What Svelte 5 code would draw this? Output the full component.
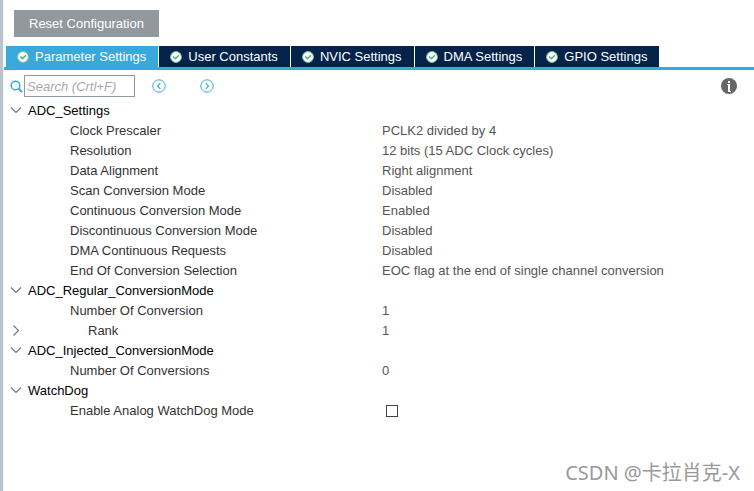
<script>
  let activeTab = $state('Parameter Settings');
  let search = $state('');
  let watchdog = $state(false);

  const tabs = [
    'Parameter Settings',
    'User Constants',
    'NVIC Settings',
    'DMA Settings',
    'GPIO Settings'
  ];

  let groups = $state([
    {
      name: 'ADC_Settings',
      open: true,
      params: [
        { name: 'Clock Prescaler', value: 'PCLK2 divided by 4' },
        { name: 'Resolution', value: '12 bits (15 ADC Clock cycles)' },
        { name: 'Data Alignment', value: 'Right alignment' },
        { name: 'Scan Conversion Mode', value: 'Disabled' },
        { name: 'Continuous Conversion Mode', value: 'Enabled' },
        { name: 'Discontinuous Conversion Mode', value: 'Disabled' },
        { name: 'DMA Continuous Requests', value: 'Disabled' },
        { name: 'End Of Conversion Selection', value: 'EOC flag at the end of single channel conversion' }
      ]
    },
    {
      name: 'ADC_Regular_ConversionMode',
      open: true,
      params: [
        { name: 'Number Of Conversion', value: '1' },
        { name: 'Rank', value: '1', nested: true }
      ]
    },
    {
      name: 'ADC_Injected_ConversionMode',
      open: true,
      params: [{ name: 'Number Of Conversions', value: '0' }]
    },
    {
      name: 'WatchDog',
      open: true,
      params: [{ name: 'Enable Analog WatchDog Mode', checkbox: true }]
    }
  ]);
</script>

{#snippet chevron(open)}
  <svg class="chevron" width="12" height="12" viewBox="0 0 12 12">
    <path d={open ? 'M1 2.5 L6 7.5 L11 2.5' : 'M3.5 0.5 L8.5 5.5 L3.5 10.5'} />
  </svg>
{/snippet}

<div class="panel">
  <button class="reset">Reset Configuration</button>

  <div class="tabs" role="tablist">
    {#each tabs as tab}
      <button
        class="tab"
        class:active={tab === activeTab}
        role="tab"
        aria-selected={tab === activeTab}
        onclick={() => (activeTab = tab)}
      >
        <svg width="12" height="12" viewBox="0 0 12 12">
          <circle cx="6" cy="6" r="5.4" fill="#fff" stroke="#7cc698" stroke-width="1" />
          <path d="M3.2 5.6 L5.4 7.8 L9 4.2" fill="none" stroke="#4bae73" stroke-width="1.4" />
        </svg>
        {tab}
      </button>
    {/each}
  </div>

  <div class="toolbar">
    <label class="search">
      <svg width="13" height="13" viewBox="0 0 13 13" fill="none" stroke="#39a9dc">
        <circle cx="5.5" cy="5.5" r="4.3" stroke-width="1.5" />
        <path d="M8.5 8.5 L12 12" stroke-width="2" />
      </svg>
      <input type="text" aria-label="Search" placeholder="Search (Crtl+F)" bind:value={search} />
    </label>
    <div class="arrows">
      <button class="icon" aria-label="Previous match">
        <svg width="14" height="14" viewBox="0 0 14 14" fill="none" stroke="#39a9dc">
          <circle cx="7" cy="7" r="6.2" />
          <path d="M8.3 4.2 L5.5 7 L8.3 9.8" stroke-width="1.2" />
        </svg>
      </button>
      <button class="icon" aria-label="Next match">
        <svg width="14" height="14" viewBox="0 0 14 14" fill="none" stroke="#39a9dc">
          <circle cx="7" cy="7" r="6.2" />
          <path d="M5.7 4.2 L8.5 7 L5.7 9.8" stroke-width="1.2" />
        </svg>
      </button>
    </div>
    <button class="icon info" aria-label="Information">
      <svg width="16" height="16" viewBox="0 0 16 16">
        <circle cx="8" cy="8" r="8" fill="#666" />
        <path d="M7 3h2v2H7z M6 6h3v7h1v1H7V7H6z" fill="#fff" />
      </svg>
    </button>
  </div>

  <table>
    <colgroup>
      <col class="name-col" />
      <col />
    </colgroup>
    <tbody>
      {#each groups as group}
        <tr>
          <th colspan="2">
            <button class="group" aria-expanded={group.open} onclick={() => (group.open = !group.open)}>
              {@render chevron(group.open)}
              {group.name}
            </button>
          </th>
        </tr>
        {#if group.open}
          {#each group.params as param}
            <tr>
              <td class="name">
                {#if param.nested}
                  <button class="group nested" aria-expanded="false">
                    {@render chevron(false)}
                    {param.name}
                  </button>
                {:else if param.checkbox}
                  <label class="indent" for="watchdog">{param.name}</label>
                {:else}
                  <span class="indent">{param.name}</span>
                {/if}
              </td>
              <td class="value">
                {#if param.checkbox}
                  <input id="watchdog" type="checkbox" bind:checked={watchdog} />
                {:else}
                  {param.value}
                {/if}
              </td>
            </tr>
          {/each}
        {/if}
      {/each}
    </tbody>
  </table>

  <div class="watermark">CSDN @卡拉肖克-X</div>
</div>

<style>
  :global(body) {
    background-color: #fff;
  }

  .panel {
    box-sizing: border-box;
    min-height: 100vh;
    padding-top: 10px;
    border-left: 3px solid #b8c4ce;
    box-shadow: inset 1px 0 #f0f0f0;
    display: flex;
    flex-direction: column;
    font-family: 'Liberation Sans', Arial, sans-serif;
    font-size: 13px;
    color: #333;
  }

  button {
    border: none;
    padding: 0;
    background: none;
    font: inherit;
    color: inherit;
    cursor: pointer;
  }

  svg {
    display: block;
    flex: none;
  }

  .reset {
    align-self: flex-start;
    height: 27px;
    margin-left: 11px;
    padding: 0 15px;
    background-color: #91989e;
    color: #fff;
  }

  .tabs {
    display: flex;
    gap: 1px;
    margin: 9px 0 0 1px;
    padding-left: 2px;
    border-bottom: 3px solid #39a9dc;
  }

  .tab {
    display: flex;
    align-items: center;
    gap: 6px;
    height: 21px;
    padding: 0 12px 0 11px;
    background-color: #03234b;
    color: #fff;
  }

  .tab.active {
    background-color: #39a9dc;
  }

  .toolbar {
    display: flex;
    align-items: center;
    height: 22px;
    margin-top: 5px;
    padding: 0 17px 0 7px;
  }

  .search {
    display: flex;
    align-items: center;
    gap: 1px;
  }

  .search input {
    box-sizing: border-box;
    width: 111px;
    height: 22px;
    padding: 0 2px;
    border: 1px solid #91989e;
    font: inherit;
    font-style: italic;
  }

  .search input::placeholder {
    color: #aaa;
  }

  .arrows {
    display: flex;
    gap: 34px;
    margin-left: 17px;
  }

  .info {
    margin-left: auto;
  }

  table {
    width: 100%;
    margin-top: 4px;
    border-collapse: collapse;
    table-layout: fixed;
  }

  .name-col {
    width: 379px;
  }

  tr {
    height: 20px;
  }

  th,
  td {
    padding: 0;
    line-height: 20px;
    font-weight: normal;
    text-align: left;
  }

  .group {
    display: flex;
    align-items: center;
    gap: 6px;
    height: 20px;
    padding-left: 7px;
    color: #000;
  }

  .group.nested {
    gap: 66px;
    color: #333;
  }

  .chevron {
    fill: none;
    stroke: #777;
    stroke-width: 1.2;
  }

  .indent {
    display: block;
    padding-left: 67px;
  }

  .value {
    color: #555;
  }

  .value input {
    appearance: none;
    display: block;
    box-sizing: border-box;
    width: 12px;
    height: 12px;
    margin: 0 4px;
    border: 1px solid #444;
    background-color: #fff;
  }

  .value input:checked {
    background-color: #39a9dc;
  }

  .watermark {
    margin-top: auto;
    padding: 0 14px 4px 0;
    text-align: right;
    font-family: 'Noto Sans', 'Noto Sans CJK SC', sans-serif;
    font-size: 20px;
    line-height: 28px;
    color: #999;
  }
</style>
